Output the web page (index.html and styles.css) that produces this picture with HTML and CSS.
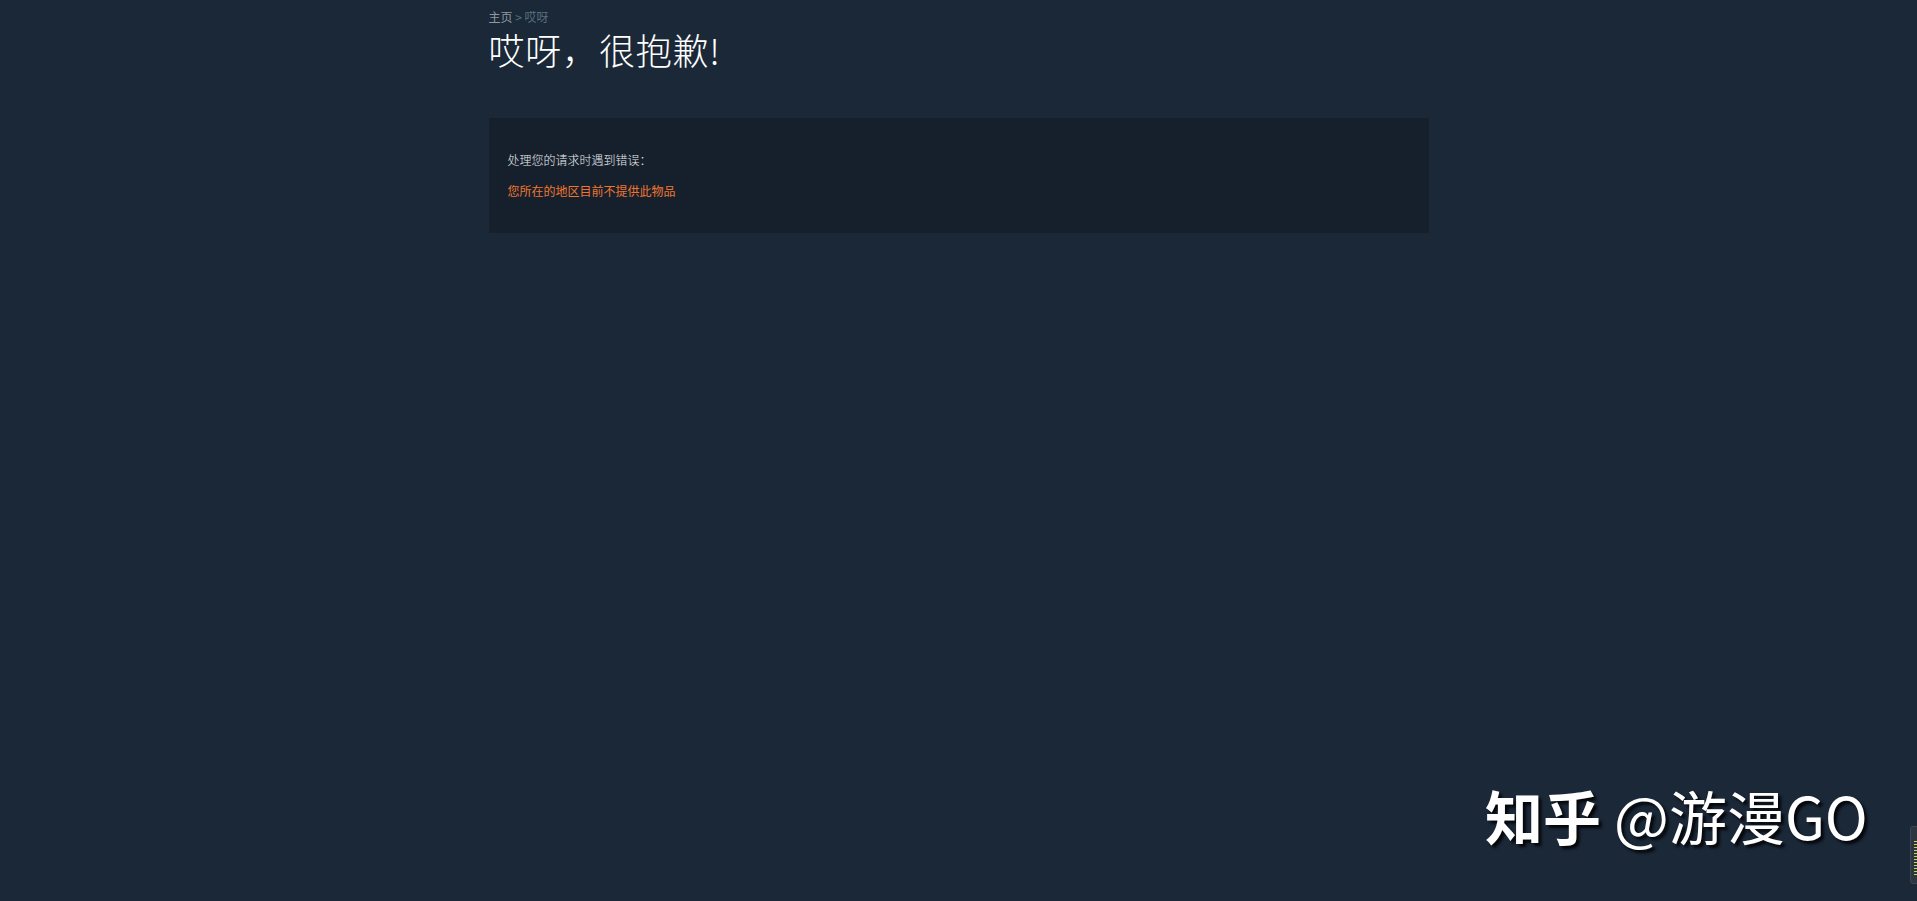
FILE: index.html
```html
<!DOCTYPE html>
<html lang="zh-CN">
<head>
    <meta charset="UTF-8">
    <meta name="viewport" content="width=device-width, initial-scale=1.0">
    <title>哎呀，很抱歉！</title>
    <link rel="stylesheet" href="styles.css">
</head>
<body>
    <div class="page-content">
        <div class="breadcrumbs">
            <a href="#">主页</a> &gt; 哎呀
        </div>
        <h1 class="page-title">哎呀，很抱歉!</h1>

        <div class="error-box">
            <h3>处理您的请求时遇到错误：</h3>
            <div class="error-text">您所在的地区目前不提供此物品</div>
        </div>
    </div>

    <div class="watermark"><span class="brand">知乎</span> @游漫GO</div>

    <div class="side-widget">
        <div class="bars"></div>
    </div>
</body>
</html>
```

FILE: styles.css
```css
body {
    margin: 0;
    min-height: 100vh;
    background: #1b2838;
    font-family: "Noto Sans CJK SC", "Noto Sans", Arial, sans-serif;
    color: #c6d4df;
    overflow: hidden;
}

.page-content {
    width: 940px;
    margin: 0 auto;
    padding-top: 10px;
}

.breadcrumbs {
    font-size: 12px;
    line-height: 13px;
    color: #56707f;
}

.breadcrumbs a {
    color: #8f98a0;
    text-decoration: none;
}

.page-title {
    margin: 0;
    font-size: 36px;
    font-weight: 300;
    line-height: 52px;
    letter-spacing: 0.8px;
    color: #ffffff;
}

.error-box {
    margin-top: 43px;
    background: #16202d;
    padding: 34px 19px 34px;
}

.error-box h3 {
    margin: 0 0 15px 0;
    font-size: 12px;
    font-weight: 300;
    line-height: 16px;
    color: #e8ecef;
}

.error-text {
    font-size: 12px;
    line-height: 16px;
    color: #f0762e;
}

.watermark {
    position: absolute;
    left: 1485px;
    top: 780px;
    font-size: 58px;
    line-height: 70px;
    font-weight: 400;
    color: #ffffff;
    text-shadow: 3px 3px 3px rgba(0, 0, 0, 0.85);
    white-space: nowrap;
}

.watermark .brand {
    font-weight: 600;
}

.side-widget {
    position: absolute;
    left: 1910px;
    top: 826px;
    width: 14px;
    height: 56px;
    background: #2d3640;
    border: 1px solid #3b4652;
    border-radius: 3px;
}

.side-widget .bars {
    margin: 14px 0 0 3px;
    height: 34px;
    background: repeating-linear-gradient(to bottom, #c7d45a 0, #c7d45a 1px, transparent 1px, transparent 3px);
}
```
